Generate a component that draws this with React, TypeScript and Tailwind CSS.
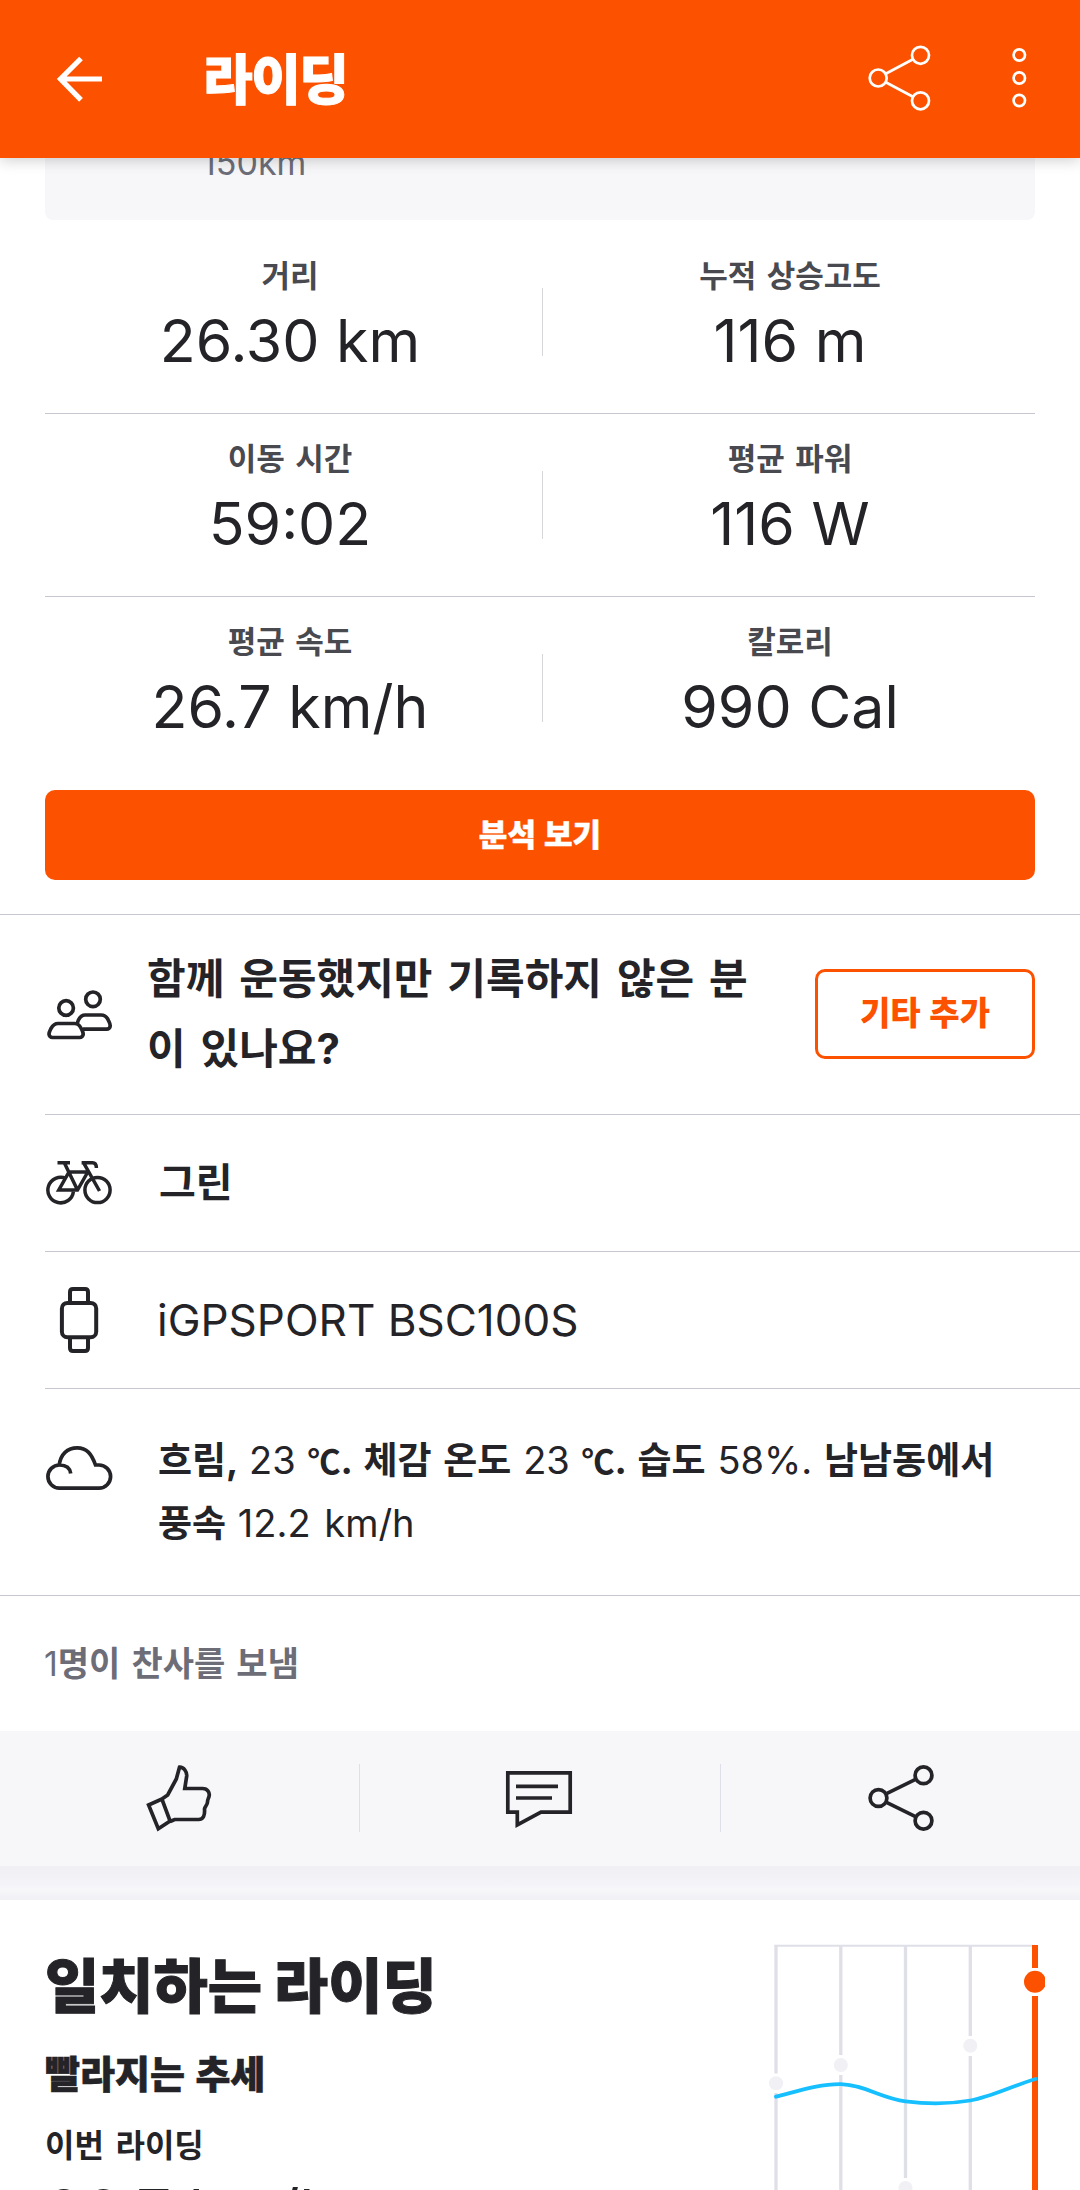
import type { ReactNode } from "react";

const stats = [
  [
    { label: "거리", value: "26.30 km" },
    { label: "누적 상승고도", value: "116 m" },
  ],
  [
    { label: "이동 시간", value: "59:02" },
    { label: "평균 파워", value: "116 W" },
  ],
  [
    { label: "평균 속도", value: "26.7 km/h" },
    { label: "칼로리", value: "990 Cal" },
  ],
];

function Icon({ children, width = 3.7 }: { children: ReactNode; width?: number }) {
  return (
    <svg
      className="size-[68px] shrink-0"
      viewBox="0 0 68 68"
      fill="none"
      stroke="currentColor"
      strokeWidth={width}
    >
      {children}
    </svg>
  );
}

function Num({ children }: { children: ReactNode }) {
  return <span className="text-[38px] leading-none font-normal">{children}</span>;
}

function Celsius() {
  return <span className="font-['Noto_Sans_CJK_KR',sans-serif] text-[33px] leading-none">℃</span>;
}

function Stat({ label, value }: { label: string; value: string }) {
  return (
    <div className="flex flex-col items-center pt-[25px]">
      <span className="text-[31px] leading-[40px] font-bold text-[#494950] [word-spacing:3px]">{label}</span>
      <span className="mt-[9px] text-[59px] leading-[72px]">{value}</span>
    </div>
  );
}

function TrendChart() {
  return (
    <svg className="h-[250px] w-[280px] shrink-0" viewBox="765 1940 280 250" fill="none">
      <path d="M774.5 1945.7H1035" stroke="#dfdfe8" strokeWidth="2" />
      <g stroke="#dfdfe8" strokeWidth="3.3">
        <path d="M776 1945V2073.5M776 2093V2190" />
        <path d="M840.8 1945V2055M840.8 2075V2190" />
        <path d="M905.5 1945V2178" />
        <path d="M970.3 1945V2036M970.3 2056V2190" />
      </g>
      <path d="M1035 1945V1968M1035 1996V2190" stroke="#fc5200" strokeWidth="6" />
      <g fill="#f0f0f5">
        <circle cx="776" cy="2083.3" r="7" />
        <circle cx="840.8" cy="2065" r="7" />
        <circle cx="905.5" cy="2188" r="7" />
        <circle cx="970.3" cy="2045.8" r="7" />
      </g>
      <circle cx="1035" cy="1981.8" r="11" fill="#fc5200" />
      <path
        d="M776 2096.7C800 2090.5 820 2084 840.8 2084.2C865 2085 882 2098.5 905.5 2101.3C925 2104 950 2104 970.3 2100.5C992 2096.5 1012 2086 1035.5 2079"
        stroke="#16bfff"
        strokeWidth="3.8"
        strokeLinecap="round"
      />
    </svg>
  );
}

export default function App() {
  return (
    <div className="flex h-[2190px] w-[1080px] flex-col overflow-hidden bg-white font-['Inter','Noto_Sans_CJK_KR',sans-serif] text-[#242428]">
      {/* Header */}
      <header className="z-10 flex h-[158px] shrink-0 items-center bg-[#fc5200] text-white shadow-[0_2px_14px_rgba(0,0,0,0.2)]">
        <svg className="ml-[45px] h-[68px] w-[68px]" viewBox="45 45 68 68" fill="none" stroke="currentColor" strokeWidth="5.2">
          <path d="M102 79H60M81 58.5L60.5 79L81 99.8" />
        </svg>
        <h1 className="ml-[90px] pt-[4px] text-[54px] leading-[68px] font-black tracking-[-1.5px] [-webkit-text-stroke:1px]">
          라이딩
        </h1>
        <svg className="ml-auto h-[68px] w-[180px]" viewBox="864 45 180 68" fill="none" stroke="currentColor" strokeWidth="2.7">
          <circle cx="878.2" cy="78" r="8.5" />
          <circle cx="920.5" cy="55.3" r="8.5" />
          <circle cx="920.5" cy="100.8" r="8.5" />
          <path d="M885.7 73.8L913 59.3M885.7 82.2L913 96.8" />
          <circle cx="1019.3" cy="55" r="5.7" />
          <circle cx="1019.3" cy="78" r="5.7" />
          <circle cx="1019.3" cy="100.5" r="5.7" />
        </svg>
        <div className="w-[36px]" />
      </header>

      {/* Tail of the achievement card */}
      <div className="mx-[45px] h-[62px] shrink-0 overflow-hidden rounded-b-lg bg-[#f7f7fa] pl-[157px]">
        <p className="-mt-[17px] text-[34px] leading-[44px] text-[#6d6d78]">150km</p>
      </div>

      {/* Stats */}
      <section className="mx-[45px] shrink-0 pt-[11px]">
        {stats.map((row, i) => (
          <div
            key={row[0].label}
            className={`flex h-[183px] border-[#c7c7d1] ${i < 2 ? "border-b" : ""}`}
          >
            <div className="flex-1 pr-[7px]">
              <Stat {...row[0]} />
            </div>
            <div className="mt-[57px] h-[68px] w-px bg-[#d5d5da]" />
            <div className="flex-1 pl-[2px]">
              <Stat {...row[1]} />
            </div>
          </div>
        ))}
      </section>

      <button className="mx-[45px] mt-[10px] h-[90px] shrink-0 rounded-[10px] bg-[#fc5200] text-[31px] font-black text-white [-webkit-text-stroke:0.5px] [word-spacing:2px]">
        분석 보기
      </button>

      {/* Details */}
      <section className="mt-[34px] shrink-0 border-y border-[#c7c7d1]">
        <div className="ml-[45px] flex h-[200px] items-center border-b border-[#c7c7d1] pr-[45px] pb-[2px]">
          <Icon>
            <circle cx="21.1" cy="28" r="7.3" />
            <circle cx="48" cy="19.3" r="7.3" />
            <path d="M13 43.5H29.5C33 43.5 35 45.5 36.5 49C38 52 38.2 53 38.2 54A3.5 3.5 0 0 1 34.7 57.5H7.5A3.5 3.5 0 0 1 4 54C4 52 5 50.5 6 48.5C8 45 9.5 43.5 13 43.5Z" />
            <path d="M32 44C33.5 38.5 35.5 35 40 35H56C60 35 62 37 63.5 40.5C65 43.5 65.2 44.5 65.2 45.7A3.5 3.5 0 0 1 61.7 49.2H38" />
          </Icon>
          <p className="ml-[34px] text-[42px] leading-[70px] font-bold whitespace-nowrap [word-spacing:5px]">
            함께 운동했지만 기록하지 않은 분
            <br />이 있나요?
          </p>
          <button className="ml-auto h-[90px] w-[220px] rounded-[10px] border-3 border-[#fc5200] text-[33px] font-black text-[#fc5200] [word-spacing:2px]">
            기타 추가
          </button>
        </div>
        <div className="ml-[45px] flex h-[137px] items-center border-b border-[#c7c7d1] pb-[2px]">
          <Icon width={3.5}>
            <path d="M21 30.4A12.8 12.8 0 1 0 28.4 43.5" />
            <circle cx="52.5" cy="42" r="12.6" />
            <path d="M12.5 14.7H25M19.4 15L32.5 42M42.8 24H24L13.8 42H32.5L42.8 24M36.6 14.7H47.5Q51.4 14.7 51.4 20M38.5 14.7L54.5 43" />
          </Icon>
          <span className="ml-[46px] pt-[2px] text-[40px] font-bold">그린</span>
        </div>
        <div className="ml-[45px] flex h-[137px] items-center border-b border-[#c7c7d1]">
          <Icon width={4}>
            <rect x="16.9" y="16.9" width="34.3" height="34.3" rx="5.5" />
            <path d="M25 16V6Q25 3 28 3H40Q43 3 43 6V16M25 52V62Q25 65 28 65H40Q43 65 43 62V52" />
          </Icon>
          <span className="ml-[44px] text-[44px]">iGPSPORT BSC100S</span>
        </div>
        <div className="ml-[45px] flex h-[206px] pt-[45px]">
          <Icon>
            <path d="M14.2 31.2C15.5 20 22.5 13.8 32.2 13.8C41.5 13.8 46.5 19.5 50.5 31H54A11.6 11.6 0 0 1 54 54.2H14.5A11.6 11.6 0 0 1 14.5 31C21 31 25 34 25.7 39.5" />
          </Icon>
          <p className="-mt-[5px] ml-[45px] text-[37px] leading-[63px] font-bold whitespace-nowrap [word-spacing:3px]">
            흐림, <Num>23</Num> <Celsius />. 체감 온도 <Num>23</Num> <Celsius />. 습도 <Num>58%.</Num> 남남동에서
            <br />
            풍속 <Num>12.2 km/h</Num>
          </p>
        </div>
      </section>

      {/* Kudos */}
      <p className="flex h-[135px] shrink-0 items-center pl-[44px] text-[34px] font-bold text-[#6d6d78] [word-spacing:3px]">
        <span className="font-normal">1</span>명이 찬사를 보냄
      </p>
      <div className="flex h-[135px] shrink-0 bg-[#f7f7fa] pt-[33px]">
        <div className="flex flex-1 justify-center">
          <Icon>
            <path d="M3.6 41L16.9 35L25.1 57L13.3 64.8L3.6 41ZM16.9 35L22.7 31L31.3 15L34.5 3.2C39 3 42 8 41.7 12L39.8 24.5H57.5C63 24.5 65 29 64 32.5C63.5 34.5 62.5 35.5 62.5 38C62.5 41 60 42 59.5 45C60 51 58.5 55.5 53.7 55.5H29.6L25.1 57.5" />
          </Icon>
        </div>
        <div className="h-[68px] w-px bg-[#dfdfe8]" />
        <div className="flex flex-1 justify-center pr-[2px]">
          <Icon>
            <path d="M2.8 8.8H65.2V48.2H36L12.3 60.8V48.2H2.8ZM11 22.3H53M11 34H47" />
          </Icon>
        </div>
        <div className="h-[68px] w-px bg-[#dfdfe8]" />
        <div className="flex flex-1 justify-center">
          <Icon>
            <circle cx="11.5" cy="34" r="8.4" />
            <circle cx="56.5" cy="11.3" r="8.4" />
            <circle cx="56.5" cy="56.7" r="8.4" />
            <path d="M19 29.8L49 15.2M19 38.2L49 52.8" />
          </Icon>
        </div>
      </div>
      <div className="h-[34px] shrink-0 bg-linear-to-b from-[#f0f0f5] from-20% via-[#f7f7fa] via-70% to-[#f0f0f5]" />

      {/* Matched rides */}
      <section className="flex h-[290px] shrink-0 justify-between overflow-hidden pt-[40px] pr-[35px] pl-[45px]">
        <div className="pt-[3px] whitespace-nowrap">
          <h2 className="text-[59px] leading-[88px] font-black [-webkit-text-stroke:1px]">일치하는 라이딩</h2>
          <h3 className="mt-[15px] text-[38px] leading-[56px] font-black [-webkit-text-stroke:0.6px] [word-spacing:3px]">
            빨라지는 추세
          </h3>
          <p className="mt-[24px] text-[32px] leading-[40px] font-bold [word-spacing:4px]">이번 라이딩</p>
          <p className="mt-[8px] text-[62px] leading-[76px]">26.7 km/h</p>
        </div>
        <TrendChart />
      </section>
    </div>
  );
}
